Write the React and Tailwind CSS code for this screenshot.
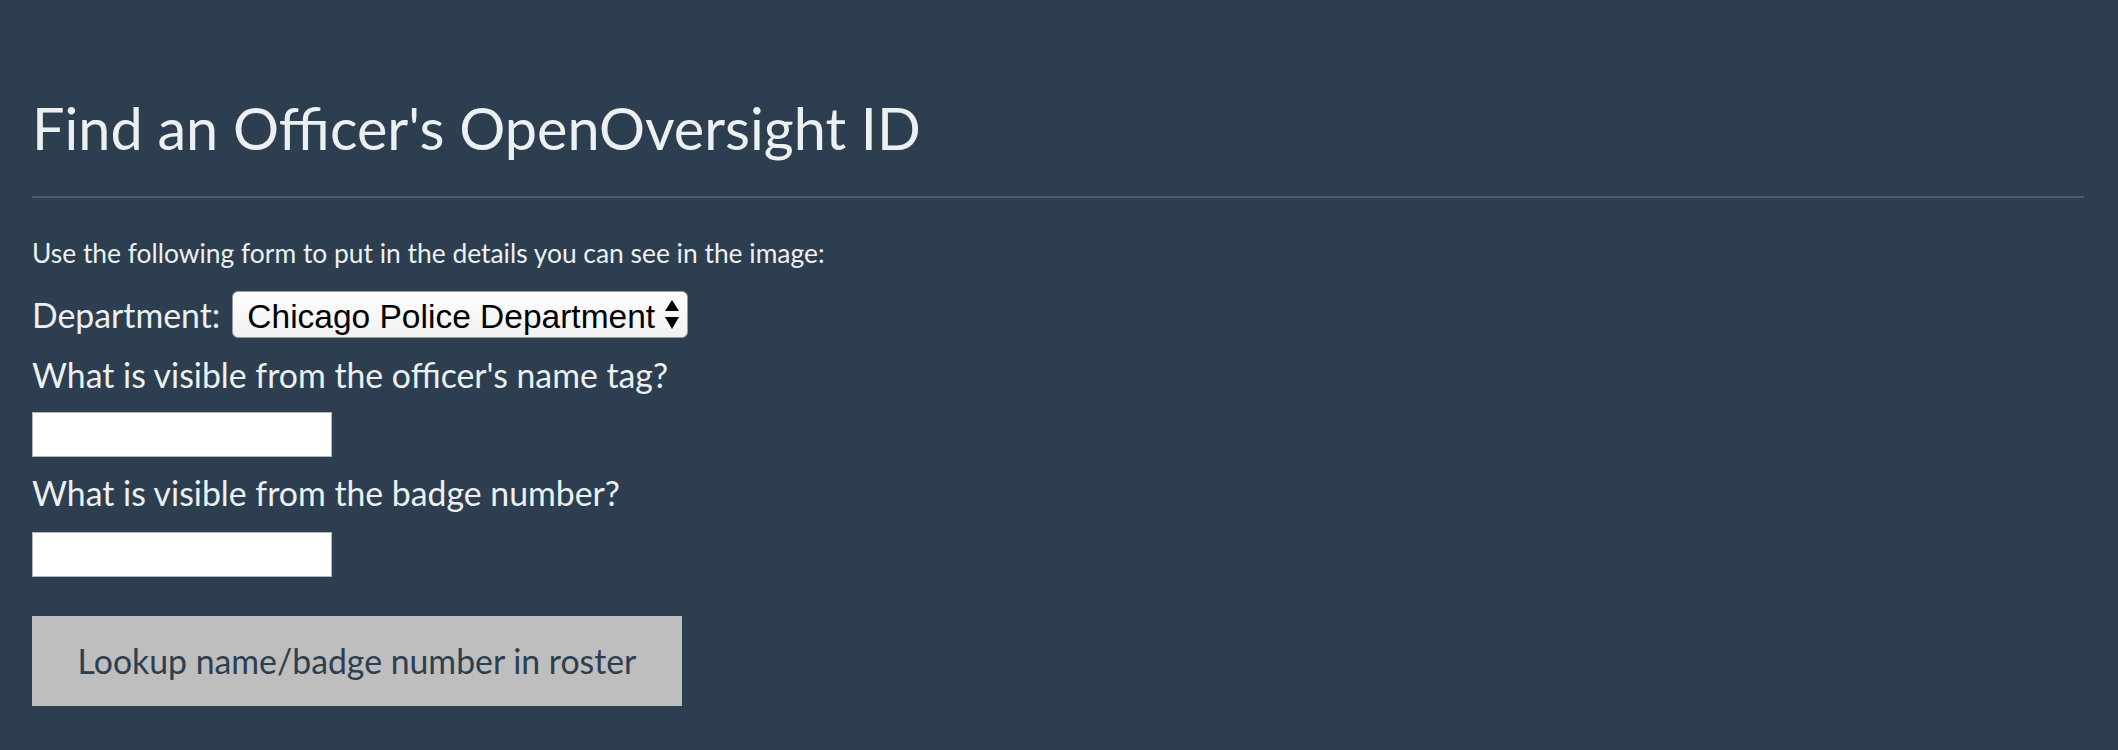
import { useState } from "react";

function SelectArrows() {
  return (
    <svg width="16" height="30" viewBox="0 0 16 30" className="pointer-events-none absolute right-[8px] top-[9px]">
      <polygon points="8,0 15,11 1,11" fill="#000" />
      <polygon points="1,17 15,17 8,29" fill="#000" />
    </svg>
  );
}

export default function App() {
  const [form, setForm] = useState({ department: "1", name: "", badge: "" });

  return (
    <div className="min-h-screen bg-[#2c3e50] font-['Lato',_'Open_Sans',_sans-serif] text-[#ecf0f1] pl-8 pr-[34px] pt-[96px] pb-10">
      <h1 className="text-[57.6px] leading-[64px] font-normal">Find an Officer's OpenOversight ID</h1>
      <div className="mt-[36px] h-[2px] bg-[#4b5c6d]"></div>

      <p className="mt-[39px] text-[26.4px] leading-[32px]">
        Use the following form to put in the details you can see in the image:
      </p>

      {/* Department */}
      <div className="mt-[22px] flex items-center gap-[12px] h-[47px]">
        <label className="text-[33.8px] leading-[40px]">Department:</label>
        <div className="relative">
          <select
            value={form.department}
            onChange={e => setForm({ ...form, department: e.target.value })}
            className="appearance-none h-[47px] w-[456px] rounded-[6px] border border-[#9a9a9a] bg-gradient-to-b from-white to-[#f1f1f1] pl-[14px] pr-[30px] text-black text-[33.5px] font-['Liberation_Sans',_Arial,_sans-serif] outline-none"
          >
            <option value="1">Chicago Police Department</option>
          </select>
          <SelectArrows />
        </div>
      </div>

      <label className="block mt-[17px] text-[33.8px] leading-[40px]">What is visible from the officer's name tag?</label>
      <input
        type="text"
        value={form.name}
        onChange={e => setForm({ ...form, name: e.target.value })}
        className="block mt-[17px] h-[45px] w-[300px] bg-white border border-[#b5b5b5] text-black outline-none"
      />

      <label className="block mt-[16px] text-[33.8px] leading-[40px]">What is visible from the badge number?</label>
      <input
        type="text"
        value={form.badge}
        onChange={e => setForm({ ...form, badge: e.target.value })}
        className="block mt-[19px] h-[45px] w-[300px] bg-white border border-[#b5b5b5] text-black outline-none"
      />

      <button className="mt-[39px] flex h-[90px] w-[650px] items-center justify-center bg-[#bebebe] text-[33.8px] text-[#2c3e50]">
        Lookup name/badge number in roster
      </button>
    </div>
  );
}
